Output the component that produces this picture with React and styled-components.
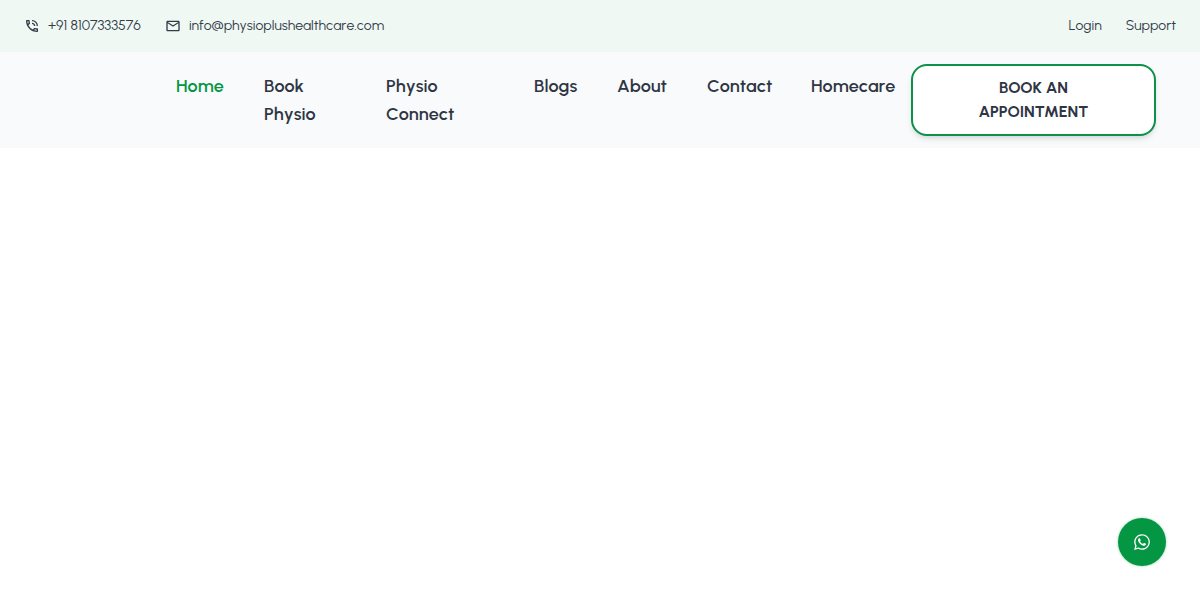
import styled, { createGlobalStyle } from "styled-components"
import { MdOutlinePhoneInTalk, MdMailOutline } from "react-icons/md"
import { FaWhatsapp } from "react-icons/fa"

const GlobalStyle = createGlobalStyle`
    * {
        box-sizing: border-box;
    }
    body {
        margin: 0;
        background-color: white;
        color: #2f3543;
        font-family: Urbanist, Lato, sans-serif;
        font-kerning: none;
    }
`

const TopBar = styled.div`
    height: 52px;
    padding: 0 24px;
    background-color: #eff8f3;
    display: flex;
    align-items: center;
    justify-content: space-between;
`

const Group = styled.div`
    display: flex;
    align-items: center;
    gap: 24px;
`

const TopLink = styled.a`
    display: flex;
    align-items: center;
    gap: 8px;
    color: #323b49;
    font-size: 14px;
    line-height: 20px;
    text-decoration: none;
`

const Header = styled.header`
    padding: 12px 44px;
    background-color: #f8fafc;
    display: flex;
    align-items: center;
    justify-content: flex-end;
    gap: 16px;
`

const Nav = styled.nav`
    display: flex;
    align-items: flex-start;
    gap: 40px;
`

const NavLink = styled.a`
    width: ${(props) => props.$width}px;
    color: ${(props) => (props.$active ? "#059643" : "#2f3543")};
    font-size: 18px;
    font-weight: 600;
    line-height: 28px;
    text-decoration: none;
`

const Button = styled.button`
    width: 245px;
    padding: 10px 50px;
    border: 2px solid #0c9148;
    border-radius: 16px;
    background-color: white;
    color: #2f3543;
    font-family: inherit;
    font-size: 16px;
    font-weight: 700;
    line-height: 24px;
    text-align: center;
    box-shadow: 0 4px 6px -1px rgba(0, 0, 0, 0.1), 0 2px 4px -2px rgba(0, 0, 0, 0.1);
    cursor: pointer;
`

const ChatLink = styled.a`
    position: fixed;
    right: 34px;
    bottom: 34px;
    width: 48px;
    height: 48px;
    border-radius: 50%;
    background-color: #059643;
    color: white;
    display: flex;
    align-items: center;
    justify-content: center;
    box-shadow: 0 0 2px 1px rgba(5, 150, 67, 0.2);
`

const links = [
    { title: "Home", width: 48, active: true },
    { title: "Book Physio", width: 82 },
    { title: "Physio Connect", width: 108 },
    { title: "Blogs", width: 43 },
    { title: "About", width: 50 },
    { title: "Contact", width: 64 },
    { title: "Homecare", width: 84 },
]

const App = () => {
    return (
        <>
            <GlobalStyle />
            <TopBar>
                <Group>
                    <TopLink href="tel:+918107333576">
                        <MdOutlinePhoneInTalk size={16} />
                        +91 8107333576
                    </TopLink>
                    <TopLink href="mailto:info@physioplushealthcare.com">
                        <MdMailOutline size={16} />
                        info@physioplushealthcare.com
                    </TopLink>
                </Group>
                <Group>
                    <TopLink href="#login">Login</TopLink>
                    <TopLink href="#support">Support</TopLink>
                </Group>
            </TopBar>
            <Header>
                <Nav>
                    {links.map((link) => (
                        <NavLink key={link.title} href="#" $width={link.width} $active={link.active}>
                            {link.title}
                        </NavLink>
                    ))}
                </Nav>
                <Button>BOOK AN APPOINTMENT</Button>
            </Header>
            <ChatLink href="#chat" aria-label="WhatsApp">
                <FaWhatsapp size={18} />
            </ChatLink>
        </>
    )
}

export default App
